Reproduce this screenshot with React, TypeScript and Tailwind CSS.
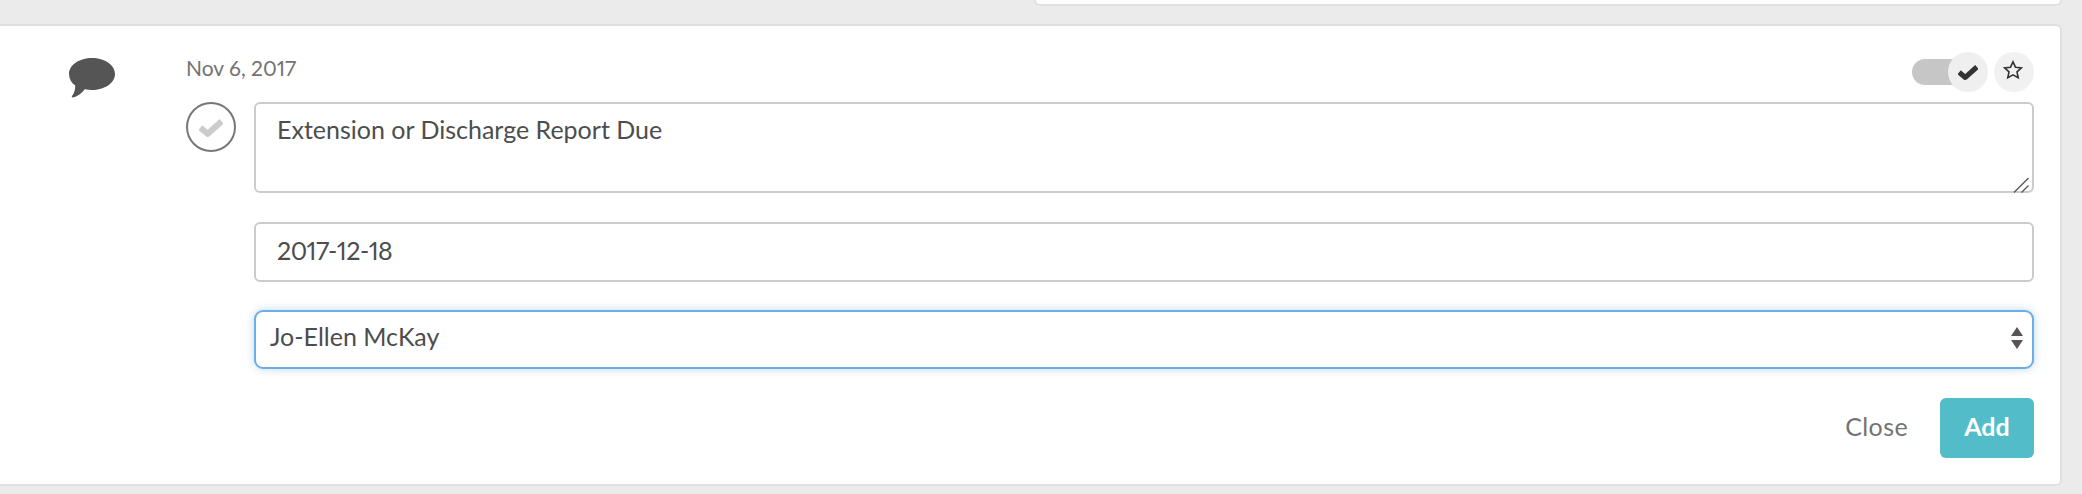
const font = "font-['Lato','Open_Sans',sans-serif]";

function BubbleIcon() {
    return (
        <svg viewBox="0 0 46 40" className="w-[46px] h-[40px] fill-[#555555]">
            <path d="M23 0C35.7 0 46 7 46 16C46 25 35.7 32 23 32C20.5 32 18 31.7 15.8 31.2C12.5 35.5 8 38.6 4 39.4C3 39.6 2.4 38.8 3 38C5.4 35.2 6.4 31.5 6.2 27.6C2.3 24.7 0 20.6 0 16C0 7 10.3 0 23 0Z" />
        </svg>
    );
}

function CheckIcon({ className }: { className: string }) {
    return (
        <svg viewBox="0 0 18 14" className={className} fill="none" stroke="currentColor" strokeWidth="4.6" strokeLinejoin="round">
            <path d="M1 6.4L6.6 11L17 1.6" />
        </svg>
    );
}

function StarIcon() {
    return (
        <svg viewBox="0 0 20 20" className="w-[20px] h-[20px] -mt-[4px] -ml-[2px]" fill="none" stroke="#333333" strokeWidth="1.6">
            <path d="M10 1.8L12.5 7.2L18.4 7.9L14 11.9L15.2 17.8L10 14.9L4.8 17.8L6 11.9L1.6 7.9L7.5 7.2Z" />
        </svg>
    );
}

function Toggle() {
    return (
        <div className="flex items-center">
            <div className="w-[50px] h-[26px] bg-[#c6c6c6] rounded-l-[13px] -mr-[14px]"></div>
            <div className="relative w-[40px] h-[40px] rounded-full bg-[#efefef] flex items-center justify-center text-[#333333]">
                <CheckIcon className="w-[20px] h-[16px] mt-[2px]" />
            </div>
            <div className="ml-[6px] w-[40px] h-[40px] rounded-full bg-[#f1f1f1] flex items-center justify-center">
                <StarIcon />
            </div>
        </div>
    );
}

function ResizeGrip() {
    return (
        <svg viewBox="0 0 16 16" className="absolute right-[5px] bottom-0 w-[16px] h-[16px] stroke-[#555555] pointer-events-none">
            <path d="M1 15.5L15.5 1M8.5 15.5L15.5 8.5" strokeWidth="1.3" fill="none" />
        </svg>
    );
}

function SelectArrows() {
    return (
        <svg viewBox="0 0 12 22" className="absolute right-[11px] top-[17px] w-[12px] h-[22px] fill-[#555555] pointer-events-none">
            <path d="M6 0L12 9H0Z" />
            <path d="M0 13H12L6 22Z" />
        </svg>
    );
}

export default function App() {
    return (
        <div className={`h-[494px] overflow-hidden bg-[#ebebeb] ${font}`}>
            <div className="ml-[1034px] w-[1028px] h-[6px] bg-white border-2 border-t-0 border-[#e0e0e0] rounded-b-[6px]"></div>

            <div className="mt-[18px] w-[2062px] h-[462px] bg-white border-2 border-l-0 border-[#e0e0e0] rounded-r-[6px] flex">
                <div className="w-[186px] shrink-0 pl-[69px] pt-[32px]">
                    <BubbleIcon />
                </div>

                <div className="w-[1848px] shrink-0 pt-[26px]">
                    <div className="flex items-center justify-between h-[40px] text-[21px] text-[#737373]">
                        <span className="mb-[8px] proportional-nums">Nov 6, 2017</span>
                        <Toggle />
                    </div>

                    <div className="mt-[10px] flex gap-[18px]">
                        <div className="w-[50px] h-[50px] shrink-0 rounded-full border-2 border-[#777777] flex items-center justify-center text-[#cccccc]">
                            <CheckIcon className="w-[24px] h-[19px] mt-[3px]" />
                        </div>

                        <div className="flex-1">
                            <div className="relative">
                                <textarea
                                    defaultValue="Extension or Discharge Report Due"
                                    className="block w-full h-[91px] resize-none rounded-[6px] border-2 border-[#cccccc] px-[21px] pt-[9px] text-[25px] leading-[32px] text-[#4d4d4d] outline-none"
                                />
                                <ResizeGrip />
                            </div>

                            <input
                                defaultValue="2017-12-18"
                                className="mt-[29px] block w-full h-[60px] rounded-[6px] border-2 border-[#cccccc] px-[21px] pb-[5px] text-[25px] text-[#4d4d4d] outline-none proportional-nums tracking-[-0.5px]"
                            />

                            <div className="relative mt-[28px]">
                                <select
                                    defaultValue="Jo-Ellen McKay"
                                    className="block w-full h-[59px] appearance-none rounded-[9px] border-2 border-[#6fade8] bg-white px-[14px] pb-[5px] text-[25px] text-[#4d4d4d] outline-none shadow-[0_0_8px_rgba(111,173,232,0.45)]"
                                >
                                    <option>Jo-Ellen McKay</option>
                                </select>
                                <SelectArrows />
                            </div>

                            <div className="mt-[29px] flex items-center justify-end">
                                <button className="pb-[3px] text-[25px] text-[#737373] tracking-[0.4px]">Close</button>
                                <button className="ml-[32px] w-[94px] h-[60px] pb-[3px] rounded-[6px] bg-[#52bdc8] text-[25px] font-bold text-white">Add</button>
                            </div>
                        </div>
                    </div>
                </div>
            </div>
        </div>
    );
}
